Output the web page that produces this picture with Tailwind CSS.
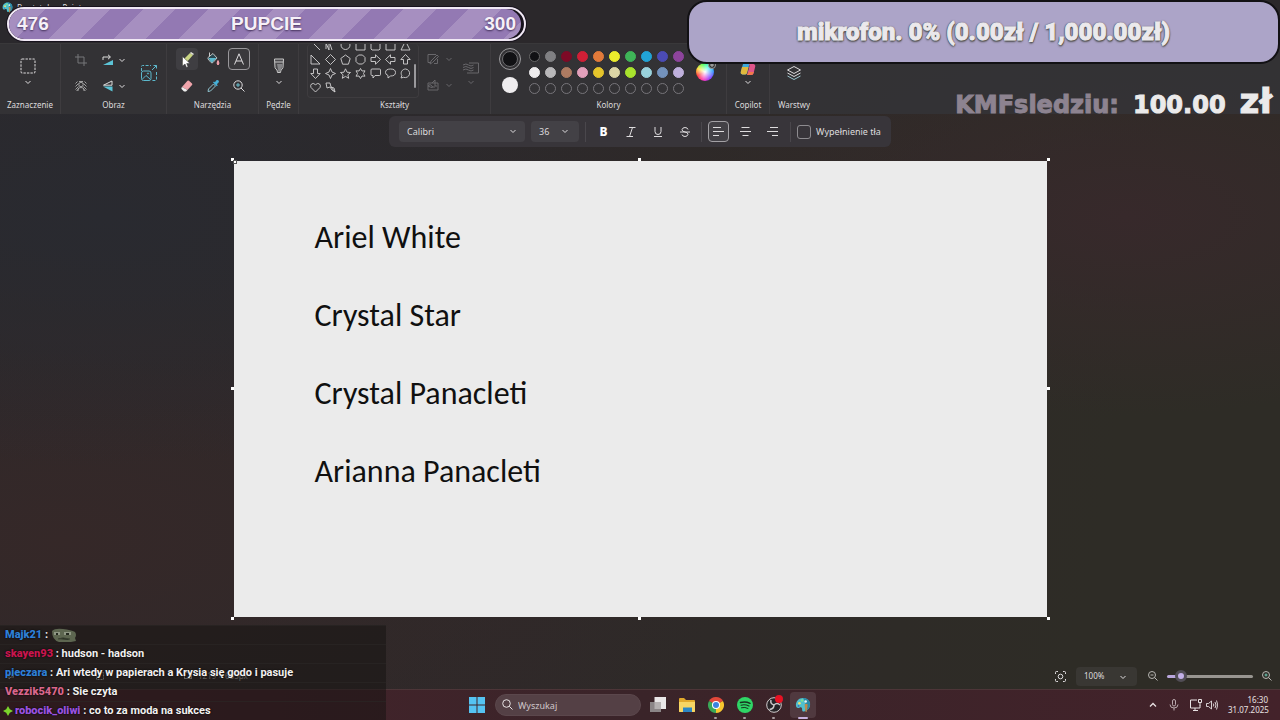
<!DOCTYPE html>
<html lang="pl" class="w-full h-full">
	<head>
		<meta charset="UTF-8">
		<meta name="viewport" content="width=device-width, initial-scale=1.0">
		<title>Bez tytułu – Paint</title>
		<script src="https://cdn.jsdelivr.net/npm/@tailwindcss/browser@4"></script>
	</head>
	<body class="relative w-full h-full min-h-screen overflow-hidden flex flex-col text-[#dedcde] text-[9px] leading-3 font-['Noto_Sans','Open_Sans',sans-serif] bg-[#2c2a2b] bg-[radial-gradient(ellipse_at_8%_30%,#292a30_0%,transparent_35%),radial-gradient(ellipse_at_5%_75%,#352828_0%,transparent_40%),radial-gradient(ellipse_at_88%_30%,#37292b_0%,transparent_28%),linear-gradient(100deg,#2c292c_0%,#2e2929_45%,#2e2c26_85%)]">

		<svg class="hidden">
			<symbol id="chevron" viewBox="0 0 8 8"><path d="M1.5 3 4 5.5 6.5 3" fill="none" stroke="currentColor"/></symbol>
			<symbol id="palette" viewBox="0 0 18 18">
				<path d="M9 1C4 1 1 5 1 9c0 3 2 4 4 3s3 0 3 2 1 3 3 2c4-1 6-4 6-8 0-4-4-7-8-7z" fill="#4fc0cf"/>
				<path d="M9 1c5 0 8 3 8 7s-2 7-6 8c1-5 2-9-2-15z" fill="#2b8aa8"/>
				<circle cx="5" cy="7" r="1.5" fill="#f0e06a"/><circle cx="8" cy="4" r="1.4" fill="#7ddf8f"/><circle cx="12" cy="5" r="1.4" fill="#e8f4f4"/><circle cx="4" cy="10" r="1" fill="#3a6fc0"/>
				<path d="M11 8h3v3l-1 6h-1l-1-6z" fill="#c08a4a"/>
			</symbol>
		</svg>

		<header class="h-[43px] shrink-0 flex items-start gap-1 px-0.5 pt-0.5 bg-[#2a282c]/80">
			<svg class="w-[11px] h-[11px]"><use href="#palette"/></svg>
			<h1 class="text-[8px]">Bez tytułu – Paint</h1>
		</header>

		<nav class="h-[71px] shrink-0 flex bg-[#343336]/90 border-t border-[#39383a] text-[8px] [&_h2]:mt-0.5">
			<section class="w-[61px] flex flex-col items-center border-r border-[#3e3c3f]">
				<button class="h-[53px] pt-[14px] pr-1 flex flex-col items-center" aria-label="Zaznacz">
					<svg class="w-4 h-4" viewBox="0 0 16 16"><rect x="1" y="1" width="14" height="14" rx="1" fill="none" stroke="currentColor" stroke-dasharray="2.4 1.1"/></svg>
					<svg class="w-2 h-2 mt-1"><use href="#chevron"/></svg>
				</button>
				<h2>Zaznaczenie</h2>
			</section>

			<section class="w-[106px] flex flex-col items-center border-r border-[#3e3c3f]">
				<div class="h-[53px] pt-1 flex items-center gap-3">
					<div class="grid grid-cols-[22px_30px] gap-x-1.5 gap-y-1">
						<button class="h-[22px] grid place-items-center text-[#77767a]" aria-label="Przytnij">
							<svg class="w-3 h-3" viewBox="0 0 12 12" fill="none" stroke="currentColor"><path d="M3 0v9h9M0 3h9v9"/></svg>
						</button>
						<button class="h-[22px] flex items-center gap-1 pl-1" aria-label="Obróć">
							<svg class="w-3 h-3 shrink-0" viewBox="0 0 12 12"><path d="M1 6V3h7M6 0.8 8.5 3 6 5.2" fill="none" stroke="#ddd"/><path d="M11 6v5H1z" fill="#5cc3d6"/></svg>
							<svg class="w-2 h-2 shrink-0"><use href="#chevron"/></svg>
						</button>
						<button class="h-[22px] grid place-items-center text-[#bbb]" aria-label="Usuń tło">
							<svg class="w-3 h-3" viewBox="0 0 12 12" fill="none" stroke="currentColor" stroke-width=".8"><path d="M.5 3.500l2-2M.5 6.500l3-3M.5 9.500l3-3M1.500 11l2-2M9.500 1.500l2 2M8.500 3.500l3 3M8.500 6.500l3 3M8.500 9l2 2M3 11V9.500q0-2 3-2t3 2V11M4 1.500h4"/><circle cx="6" cy="4.500" r="2.200"/></svg>
						</button>
						<button class="h-[22px] flex items-center gap-1 pl-1" aria-label="Odwróć">
							<svg class="w-3 h-3 shrink-0" viewBox="0 0 12 12"><path d="M1.500 5.200 10 1v4.200z" fill="none" stroke="#ddd"/><path d="M1 6.500h9.500v5z" fill="#5cc3d6"/></svg>
							<svg class="w-2 h-2 shrink-0"><use href="#chevron"/></svg>
						</button>
					</div>
					<button aria-label="Zmień rozmiar">
						<svg class="w-[18px] h-[18px]" viewBox="0 0 18 18" fill="none" stroke="#5cb8cc"><path d="M1.500 7V2.500q0-1 1-1H11M16.500 8v7.500q0 1-1 1H12" stroke-dasharray="3 1.500"/><path d="M12 6l4.500-4.500M13.500 1.500h3v3"/><rect x="1.500" y="7" width="9.500" height="9.500" rx="2"/><path d="M2.500 15 6 11.500l4 3.500"/><circle cx="8" cy="9.500" r=".6"/></svg>
					</button>
				</div>
				<h2>Obraz</h2>
			</section>

			<section class="w-[92px] flex flex-col items-center border-r border-[#3e3c3f]">
				<div class="h-[53px] pt-1 grid grid-cols-3 gap-x-1 gap-y-1">
					<button class="w-[22px] h-[22px] grid place-items-center rounded-sm bg-[#3f3e42]" aria-label="Ołówek">
						<svg class="w-4 h-4" viewBox="0 0 16 16"><path d="M4 9 11 2l3 2-7 8-4 2z" fill="#c9d483"/><path d="M11 2l1-1 3 2-1 1z" fill="#e8e8e0"/><path d="M4 9l3 3-4 2z" fill="#6d7358"/></svg>
					</button>
					<button class="w-[22px] h-[22px] grid place-items-center" aria-label="Wypełnienie">
						<svg class="w-3.5 h-3.5" viewBox="0 0 14 14"><path d="M2 5.500 7 1.500l4 4.500-4 4.500q-1 .7-2 0L2 7z" fill="#29464f" stroke="#ccc" stroke-width=".9"/><path d="M2.500 6h8l-4 4.300H5z" fill="#5cb8cc"/><path d="M3.500.5v4" stroke="#ccc"/><path d="M12 8.500q2 3 0 4.500-2-1.500 0-4.500z" fill="#f2a3ae" stroke="#f2a3ae"/></svg>
					</button>
					<button class="w-[22px] h-[22px] grid place-items-center rounded-[4px] border border-[#99979b] bg-[#3a393c]" aria-label="Tekst">
						<svg class="w-3 h-3" viewBox="0 0 12 12" fill="none" stroke="currentColor"><path d="M1.500 11.500 6 .8l4.500 10.700M3 8h6"/></svg>
					</button>
					<button class="w-[22px] h-[22px] grid place-items-center" aria-label="Gumka">
						<svg class="w-3.5 h-3.5" viewBox="0 0 14 14"><path d="M2 8 7.500 1.800q.7-.6 1.500 0l3 2.700q.7.700 0 1.500L7.500 11z" fill="#f0a4ab"/><path d="M2 8l5.500 3-1.500 1.500H4L1.500 10q-.5-1 .5-2z" fill="#eee"/></svg>
					</button>
					<button class="w-[22px] h-[22px] grid place-items-center" aria-label="Selektor kolorów">
						<svg class="w-3.5 h-3.5" viewBox="0 0 14 14"><path d="M2 12.500l.5-2.500L7.500 5l2 2-5 5z" fill="none" stroke="#8fc3cf"/><path d="M7 3.500 10.800 7.200l1-1-1-1L13 3q0-2.500-2.300-2L8.800 3.200 8 2.500z" fill="#46b0d8"/></svg>
					</button>
					<button class="w-[22px] h-[22px] grid place-items-center" aria-label="Lupa">
						<svg class="w-3 h-3" viewBox="0 0 12 12" fill="none" stroke="currentColor"><circle cx="5" cy="5" r="4.200"/><path d="M8 8l3.500 3.500"/><path d="M5 3v4M3 5h4" stroke="#6ac0d0"/></svg>
					</button>
				</div>
				<h2>Narzędzia</h2>
			</section>

			<section class="w-10 flex flex-col items-center border-r border-[#3e3c3f]">
				<button class="h-[53px] pt-[14px] flex flex-col items-center" aria-label="Pędzel">
					<svg class="w-4 h-4" viewBox="0 0 16 16"><path d="M3.500 1h9l-.5 8.500q-.3 1.500-2 2.500L9.500 14.500h-3L6 12q-1.700-1-2-2.500z" fill="#4c4b4e" stroke="#c8c8c8"/><path d="M4 4h8" stroke="#c8c8c8"/><path d="M6 6h5.500l-1 5-2 3h-1z" fill="#858588"/></svg>
					<svg class="w-2 h-2 mt-1"><use href="#chevron"/></svg>
				</button>
				<h2>Pędzle</h2>
			</section>

			<section class="w-48 flex flex-col items-center border-r border-[#3e3c3f]">
				<div class="w-full h-[53px] pl-2 flex">
					<div class="w-[112px] h-[54px] flex overflow-hidden border border-t-0 border-[#3e3c3f] rounded">
						<div id="shapes" class="-mt-1.5 grid grid-cols-7 auto-rows-[14px] content-start"></div>
						<div class="w-0.5 h-6 mt-5 ml-px rounded bg-[#9a999c]"></div>
					</div>
					<div class="ml-2 pt-1 grid grid-cols-[16px_10px] gap-x-0.5 gap-y-1 content-start items-center text-[#68676b]">
						<svg class="w-3 h-[22px]" viewBox="0 0 12 12" fill="none" stroke="currentColor"><path d="M9 1.500H1v8h3M3 11l1-3 6-6 1.500 1.500-6 6zM10.500 6v4.500H7"/></svg>
						<svg class="w-2 h-2"><use href="#chevron"/></svg>
						<svg class="w-3 h-[22px]" viewBox="0 0 12 12" fill="none" stroke="currentColor"><path d="M1 4h10v7H1zM1 7q2-3 4 0t-4 0M5 4l3-3v6h2M5 8h3"/></svg>
						<svg class="w-2 h-2"><use href="#chevron"/></svg>
					</div>
					<div class="ml-2 pt-[18px] flex flex-col items-center text-[#68676b]">
						<svg class="w-4 h-3" viewBox="0 0 16 12" fill="none" stroke="currentColor"><path d="M6 1h9.500v10H4"/><path d="M0 3q3-2 5.500 0t5 0M0 5.500q3-2 5.500 0t5 0M0 8q3-2 5.500 0t5 0"/></svg>
						<svg class="w-2 h-2 mt-1"><use href="#chevron"/></svg>
					</div>
				</div>
				<h2>Kształty</h2>
			</section>

			<section class="w-[236px] flex flex-col items-center border-r border-[#3e3c3f]">
				<div class="w-full h-[53px] pt-1 pl-2 flex">
					<div class="w-[22px] flex flex-col items-center gap-1">
						<button class="w-[22px] h-[22px] rounded-full border border-[#9b9a9d] p-0.5" aria-label="Kolor 1"><span class="block w-full h-full rounded-full border border-[#6c6b6e] bg-[#111114]"></span></button>
						<button class="w-4 h-4 mt-[3px] rounded-full bg-[#eeecee]" aria-label="Kolor 2"></button>
					</div>
					<div id="colors" class="ml-2 mt-[3px] grid grid-cols-10 auto-rows-[16px] gap-x-[5px] content-start"></div>
					<button class="relative ml-3 mt-[15px] w-[18px] h-[18px] rounded-full bg-[radial-gradient(circle,#fff_0%,transparent_70%),conic-gradient(from_90deg,#38f,#83f,#f3b,#f33,#fd3,#4f5,#2ee,#38f)]" aria-label="Edytuj kolory">
						<svg class="absolute -top-0.5 -right-0.5 w-2 h-2" viewBox="0 0 8 8"><circle cx="4" cy="4" r="3.500" fill="#333" stroke="#999"/><path d="M4 2v4M2 4h4" stroke="#bbb"/></svg>
					</button>
				</div>
				<h2>Kolory</h2>
			</section>

			<section class="w-[43px] flex flex-col items-center border-r border-[#3e3c3f]">
				<button class="h-[53px] pt-[17px] flex flex-col items-center" aria-label="Copilot">
					<svg class="w-4 h-4" viewBox="0 0 16 16"><path d="M4 1h6L7 12q-.5 1.500-2 1.500H2.500Q0 13 1 10l2-7z" fill="#3fa7d8"/><path d="M1 10l1-4h6.500L7 12q-.5 1.500-2 1.500H2.500Q0 13 1 10z" fill="#e0b83c"/><path d="M9 3h4.500q2.500.5 1.500 3.500l-1.500 6q-.5 1.500-2 1.500H7l2.500-9z" fill="#e0558a"/><path d="M10 1h2q1.500.5 1.500 2H9z" fill="#9a6be0"/><path d="M9 11h5l-1 2q-.5 1-2 1H7z" fill="#f07a4a"/></svg>
					<svg class="w-2 h-2 mt-px"><use href="#chevron"/></svg>
				</button>
				<h2>Copilot</h2>
			</section>

			<section class="w-12 flex flex-col items-center">
				<button class="h-[53px] grid place-items-center pt-1" aria-label="Warstwy">
					<svg class="w-4 h-4" viewBox="0 0 16 16" fill="none" stroke="currentColor" stroke-linejoin="round"><path d="M8 1.500 14.500 5 8 8.500 1.500 5z"/><path d="M1.500 8 8 11.500 14.500 8"/><path d="M1.500 11 8 14.500l6.500-3.500" stroke="#9cc6cf"/></svg>
				</button>
				<h2>Warstwy</h2>
			</section>
		</nav>

		<main class="flex-1 min-h-0 flex flex-col items-center pt-0.5">
			<div class="h-[31px] px-[10px] flex items-center rounded-md bg-[#38353a]">
				<div class="relative w-[126px] h-[21px]">
					<select class="appearance-none w-full h-full pl-2 rounded-sm bg-[#434146]" aria-label="Czcionka"><option>Calibri</option></select>
					<svg class="absolute right-2 top-1.5 w-2 h-2 pointer-events-none"><use href="#chevron"/></svg>
				</div>
				<div class="relative w-12 h-[21px] ml-1.5">
					<select class="appearance-none w-full h-full pl-2 rounded-sm bg-[#434146]" aria-label="Rozmiar"><option>36</option></select>
					<svg class="absolute right-2.5 top-1.5 w-2 h-2 pointer-events-none"><use href="#chevron"/></svg>
				</div>
				<div class="w-px h-5 ml-1.5 mr-1 bg-[#4a474c]"></div>
				<button class="w-[27px] text-[12px] font-extrabold text-white" aria-label="Pogrubienie">B</button>
				<button class="w-[27px] grid place-items-center" aria-label="Kursywa"><svg class="w-2.5 h-2.5" viewBox="0 0 10 10" fill="none" stroke="currentColor"><path d="M3 .5h6.500M.5 9.500H7M6.500.5l-3 9"/></svg></button>
				<button class="w-[27px] grid place-items-center" aria-label="Podkreślenie"><svg class="w-2.5 h-2.5" viewBox="0 0 10 10" fill="none" stroke="currentColor"><path d="M2 0v4.500q0 3 3 3t3-3V0M1 9.500h8"/></svg></button>
				<button class="w-[27px] grid place-items-center" aria-label="Przekreślenie"><svg class="w-2.5 h-2.5" viewBox="0 0 10 10" fill="none" stroke="currentColor"><path d="M8 2.500Q7.500.5 5 .5T2 2.700Q2 4.500 5 5t3 2.300Q7.500 9.500 5 9.500T2 7.500M0 5h10"/></svg></button>
				<div class="w-px h-5 mx-[3px] bg-[#4a474c]"></div>
				<button class="w-[27px] grid place-items-center" aria-label="Do lewej"><span class="w-[21px] h-[21px] grid place-items-center rounded-[4px] border border-[#a3a1a5] bg-[#434146]"><svg class="w-[11px] h-[9px]" viewBox="0 0 11 9" stroke="currentColor"><path d="M0 .5h8M0 4.500h11M0 8.500h6"/></svg></span></button>
				<button class="w-[27px] grid place-items-center" aria-label="Do środka"><svg class="w-[11px] h-[9px]" viewBox="0 0 11 9" stroke="currentColor"><path d="M1.500.5h8M0 4.500h11M2.500 8.500h6"/></svg></button>
				<button class="w-[27px] grid place-items-center" aria-label="Do prawej"><svg class="w-[11px] h-[9px]" viewBox="0 0 11 9" stroke="currentColor"><path d="M3 .5h8M0 4.500h11M5 8.500h6"/></svg></button>
				<div class="w-px h-5 ml-1 mr-1.5 bg-[#4a474c]"></div>
				<input id="fill" type="checkbox" class="appearance-none w-[14px] h-[14px] rounded-[3px] border border-[#8e8c90]">
				<label for="fill" class="ml-[5px]">Wypełnienie tła</label>
			</div>

			<div class="relative mt-3.5 w-[813px] h-[456px] shrink-0 bg-[#ebebeb] text-[#101010]">
				<div class="pl-[81px] pt-[57px] flex flex-col gap-[39px] font-['Carlito','Lato',sans-serif] text-[32px] leading-[39px]">
					<p>Ariel White</p>
					<p>Crystal Star</p>
					<p>Crystal Panacleti</p>
					<p>Arianna Panacleti</p>
				</div>
				<i class="absolute -left-[3px] -top-[3px] w-[3px] h-[3px] bg-white"></i>
				<i class="absolute -left-px -top-px w-1 h-1 bg-white border border-[#555]"></i>
				<i class="absolute left-1/2 -top-[3px] -ml-0.5 w-[3px] h-[3px] bg-white"></i>
				<i class="absolute -right-[3px] -top-[3px] w-[3px] h-[3px] bg-white"></i>
				<i class="absolute -left-[3px] top-1/2 -mt-0.5 w-[3px] h-[3px] bg-white"></i>
				<i class="absolute -right-[3px] top-1/2 -mt-0.5 w-[3px] h-[3px] bg-white"></i>
				<i class="absolute -left-[3px] -bottom-[3px] w-[3px] h-[3px] bg-white"></i>
				<i class="absolute left-1/2 -bottom-[3px] -ml-0.5 w-[3px] h-[3px] bg-white"></i>
				<i class="absolute -right-[3px] -bottom-[3px] w-[3px] h-[3px] bg-white"></i>
			</div>
		</main>

		<footer class="h-[26px] shrink-0 flex items-center px-2 text-[#a9a8a6]">
			<svg class="w-2 h-2" viewBox="0 0 8 8" fill="none" stroke="currentColor"><path d="M1 1v6l2-2h3z"/></svg>
			<svg class="w-2 h-2 ml-20" viewBox="0 0 8 8"><rect x=".5" y=".5" width="7" height="7" fill="none" stroke="currentColor" stroke-dasharray="2 1"/></svg>
			<svg class="w-2 h-2 ml-20" viewBox="0 0 8 8"><rect x=".5" y=".5" width="7" height="6" fill="none" stroke="currentColor"/></svg>
			<span class="ml-1.5 text-[8px]">1219 × 685px</span>
			<div class="ml-auto flex items-center text-[#dedcde]">
				<svg class="w-[11px] h-[11px]" viewBox="0 0 11 11" fill="none" stroke="currentColor"><path d="M.5 3V1.500q0-1 1-1H3M8 .5h1.500q1 0 1 1V3M10.500 8v1.500q0 1-1 1H8M3 10.500H1.500q-1 0-1-1V8"/><circle cx="5.500" cy="5.500" r="2.300"/></svg>
				<div class="relative w-[61px] h-[19px] ml-2.5">
					<select class="appearance-none w-full h-full pl-2 rounded-sm bg-[#393733] text-[8px]" aria-label="Powiększenie"><option>100%</option></select>
					<svg class="absolute right-2.5 top-1.5 w-2 h-2 pointer-events-none"><use href="#chevron"/></svg>
				</div>
				<button class="ml-[11px]" aria-label="Pomniejsz"><svg class="w-[10px] h-[10px]" viewBox="0 0 10 10" fill="none" stroke="#b8b6b3"><circle cx="4" cy="4" r="3.500"/><path d="M6.500 6.500 9.500 9.500M2.500 4h3"/></svg></button>
				<input type="range" min="0" max="100" value="11" aria-label="Skala" class="appearance-none w-[86px] h-[3px] ml-[9px] rounded-full bg-linear-to-r from-[#b9a6dc] from-15% to-[#989590] to-15% [&::-webkit-slider-thumb]:appearance-none [&::-webkit-slider-thumb]:w-3 [&::-webkit-slider-thumb]:h-3 [&::-webkit-slider-thumb]:rounded-full [&::-webkit-slider-thumb]:border-3 [&::-webkit-slider-thumb]:border-[#514d55] [&::-webkit-slider-thumb]:bg-[#c3b0e8]">
				<button class="ml-[9px]" aria-label="Powiększ"><svg class="w-[10px] h-[10px]" viewBox="0 0 10 10" fill="none" stroke="#b8b6b3"><circle cx="4" cy="4" r="3.500"/><path d="M6.500 6.500 9.500 9.500"/><path d="M2.500 4h3M4 2.500v3" stroke="#6fc7b4"/></svg></button>
			</div>
		</footer>

		<div class="h-[31px] shrink-0 grid grid-cols-[1fr_auto_1fr] items-center border-t border-[#4d3538] bg-linear-to-r from-[#48222b] via-[#3a2429] to-[#43222a]">
			<span></span>
			<div class="flex items-center">
				<button class="w-7 grid place-items-center" aria-label="Start"><svg class="w-4 h-4" viewBox="0 0 16 16" fill="#55c3f2"><path d="M0 0h7.500v7.500H0zM8.500 0H16v7.500H8.500zM0 8.500h7.500V16H0zM8.500 8.500H16V16H8.500z"/></svg></button>
				<div class="relative ml-1 mr-0.5">
					<input type="text" placeholder="Wyszukaj" aria-label="Wyszukaj" class="block w-[146px] h-[22px] pl-[22px] rounded-full bg-[#544045] border border-[#5b474c] text-[9px] placeholder-[#d0c6c9]">
					<svg class="absolute left-[7px] top-[5px] w-[11px] h-[11px]" viewBox="0 0 11 11" fill="none" stroke="#e8e3e4"><circle cx="4.500" cy="4.500" r="3.800"/><path d="M7.300 7.300 10.500 10.500"/></svg>
				</div>
				<button class="w-[29px] grid place-items-center" aria-label="Widok zadań"><svg class="w-4 h-4" viewBox="0 0 16 16"><path d="M4.500 0H16v12H4.500z" fill="#e9e7e8"/><path d="M0 5h11v10H0z" fill="#8b8587"/><path d="M4.500 5H11v7H4.500z" fill="#b5b1b2"/></svg></button>
				<button class="w-[29px] grid place-items-center" aria-label="Eksplorator plików"><svg class="w-4 h-4" viewBox="0 0 16 16"><path d="M0 2q0-1 1-1h4l2 2h8q1 0 1 1v11H0z" fill="#e2a92c"/><path d="M0 5h16v9q0 1-1 1H1q-1 0-1-1z" fill="#f7d564"/><path d="M4 10.500h9V15H4z" fill="#2b86c5"/></svg></button>
				<button class="relative w-[29px] h-7 grid place-items-center" aria-label="Chrome"><svg class="w-4 h-4" viewBox="0 0 16 16"><path d="M8 8 1.070 4A8 8 0 0 1 14.930 4z" fill="#e2483a"/><path d="M8 8V16A8 8 0 0 1 1.070 4z" fill="#3aa757"/><path d="M8 8 14.930 4A8 8 0 0 1 8 16z" fill="#f7c62f"/><circle cx="8" cy="8" r="4" fill="#fff"/><circle cx="8" cy="8" r="3" fill="#3b82e0"/></svg><i class="absolute bottom-0 w-[3px] h-0.5 rounded bg-[#a99da0]"></i></button>
				<button class="relative w-[29px] h-7 grid place-items-center" aria-label="Spotify"><svg class="w-4 h-4" viewBox="0 0 16 16" fill="none" stroke="#17331f" stroke-linecap="round"><circle cx="8" cy="8" r="8" fill="#2fd566" stroke="none"/><path d="M3.500 5.500q5-1.500 9.500.8" stroke-width="1.500"/><path d="M4 8.200q4-1.200 8 .8" stroke-width="1.200"/><path d="M4.500 10.700q3.500-1 6.500.7"/></svg><i class="absolute bottom-0 w-[3px] h-0.5 rounded bg-[#a99da0]"></i></button>
				<button class="relative w-[29px] h-7 grid place-items-center" aria-label="OBS"><svg class="w-4 h-4" viewBox="0 0 16 16"><circle cx="8" cy="8" r="7.300" fill="#272427" stroke="#d0cccd"/><path d="M8 8q-4-1-3-5M8 8q3-3 6 0M8 8q0 4-4.500 4.500" fill="none" stroke="#c9c5c6" stroke-width="1.500"/></svg><b class="absolute top-1 right-[5px] w-2 h-2 rounded-full bg-[#e81123]"></b><i class="absolute bottom-0 w-[3px] h-0.5 rounded bg-[#a99da0]"></i></button>
				<button class="relative w-[29px] h-7 grid place-items-center" aria-label="Paint"><span class="w-[26px] h-[26px] grid place-items-center rounded-sm bg-[#50393f]"><svg class="w-4 h-4"><use href="#palette"/></svg></span><i class="absolute bottom-0 w-2.5 h-0.5 rounded bg-[#c9b3e0]"></i></button>
			</div>
			<div class="flex items-center justify-end pr-3 text-[#e8e2e3] text-[8px]">
				<svg class="w-2 h-2" viewBox="0 0 8 8"><path d="M1 5.500 4 2.500l3 3" fill="none" stroke="currentColor" stroke-width="1.300"/></svg>
				<svg class="w-[10px] h-3 ml-3" viewBox="0 0 10 12" fill="none" stroke="#b9a9ad"><rect x="3.500" y=".5" width="3" height="6.500" rx="1.500"/><path d="M1 5.500q0 3.500 4 3.500t4-3.500M5 9v2.500"/></svg>
				<svg class="w-3 h-3 ml-[11px]" viewBox="0 0 12 12" fill="none" stroke="currentColor"><path d="M7 1H.5v8H10V6M3 11.500h5M5 9v2.500"/><path d="M8.500.5h3v3h-3zM10 3.500v3"/></svg>
				<svg class="w-3 h-3 ml-1" viewBox="0 0 12 12" fill="none" stroke="currentColor"><path d="M.5 4.500v3h2L5.500 10V2l-3 2.500zM7.300 4.500q1 1.500 0 3M9 3q2 3 0 6M10.500 1.500q2.500 4.500 0 9" stroke-width=".9"/></svg>
				<div class="ml-[10px] w-10 text-right leading-[10px] whitespace-nowrap"><p>16:30</p><p>31.07.2025</p></div>
			</div>
		</div>

		<!-- stream overlays -->
		<div class="absolute left-[7px] top-[7px] w-[519px] h-[34px] rounded-full border-2 border-[#f0e8f4] bg-[#17121c] shadow-[0_0_0_1px_#17121c] font-['Liberation_Sans',sans-serif] text-[19px] font-bold text-[#f6f0f8]">
			<div class="grid grid-cols-3 items-center h-full mr-[3px] pl-2 pr-[5px] rounded-full bg-[repeating-linear-gradient(135deg,#9379b3_0px,#9379b3_3px,#a68fc0_3px,#a68fc0_26px,#9379b3_26px,#9379b3_46px)] [text-shadow:0_1px_2px_#43305a]">
				<span>476</span>
				<span class="text-center">PUPCIE</span>
				<span class="text-right">300</span>
			</div>
		</div>

		<div class="absolute left-[687px] right-0 top-0 h-[64px] grid place-items-center rounded-[20px] border-2 border-[#121114] bg-[#aca4c8] font-['Roboto',sans-serif] text-[24px] leading-8 font-black text-[#ebe9ec] [-webkit-text-stroke:1px_#ebe9ec] [text-shadow:0_0_2px_#444,1px_1px_1px_#555,-1px_0_1px_#555,0_2px_2px_#555]">
			<span>mikrofon. 0% (0.00zł / 1,000.00zł)</span>
		</div>

		<div class="absolute right-2 top-[85px] flex items-baseline gap-3.5 font-['DejaVu_Sans',sans-serif] font-bold text-[24px] leading-8 text-[#ebeaea] [-webkit-text-stroke:1px_currentColor]">
			<span class="text-[#8d8390]">KMFsledziu:</span>
			<span>100.00</span>
			<span class="text-[34px]">zł</span>
		</div>

		<ul class="absolute left-0 bottom-0 w-[386px] bg-[#141110]/50 font-['Roboto',sans-serif] text-[11px] leading-[18px] font-bold text-[#f2f0f0] [&>li]:h-[19px] [&>li]:pl-[5px] [&>li]:border-t [&>li]:border-[#2c2826]/60 [text-shadow:0_0_2px_#000]">
			<li><b class="text-[#2f7fd6]">Majk21</b> :
				<svg class="inline-block w-[26px] h-[15px]" viewBox="0 0 26 15"><path d="M1 3Q4 0 12 1t12 3q2 3 0 6l1 3-5 1H8Q1 12 1 3z" fill="#5d6650"/><path d="M3 4h6v3H3zM13 4h7v3h-7z" fill="#8f9784"/><path d="M5 5h2v2H5zM15 5h3v2h-3zM7 11q5-3 12 1" fill="#24291f"/><path d="M7 11q5-2 12 0" fill="none" stroke="#3a4132"/></svg>
			</li>
			<li><b class="text-[#c8164f]">skayen93</b> : <span>hudson - hadson</span></li>
			<li><b class="text-[#2f7fd6]">pieczara</b> : <span>Ari wtedy w papierach a Krysia się godo i pasuje</span></li>
			<li><b class="text-[#d9668c]">Vezzik5470</b> : <span>Sie czyta</span></li>
			<li><svg class="inline-block -ml-0.5 mr-0.5 w-[10px] h-[10px]" viewBox="0 0 10 10"><path d="M5 0 6.800 3.200 10 5 6.800 6.800 5 10 3.200 6.800 0 5 3.200 3.200z" fill="#7bd42c"/></svg><b class="text-[#9a52e0]">robocik_oliwi</b> : <span>co to za moda na sukces</span></li>
		</ul>

		<!-- mouse pointer -->
		<svg class="absolute left-[182px] top-[56px] w-[9px] h-3 pointer-events-none" viewBox="0 0 9 12"><path d="M.5.5v9.500L3 8l1.500 3.500 1.500-.7L4.700 7.500H8z" fill="#fff" stroke="#333" stroke-width=".5"/></svg>
	</body>
</html>
<script>
	const colors = [
		"#111114", "#808083", "#7d0a26", "#d01f36", "#e27a3a", "#ecec2c", "#3fb558", "#22a4d6", "#4b4bb5", "#8d449c",
		"#eeecee", "#b9b8ba", "#ae7b62", "#e3a0bb", "#e5c42b", "#dcd5a6", "#a8e32d", "#9ad2dc", "#7392bc", "#bfb0dc",
		"", "", "", "", "", "", "", "", "", "",
	];
	const shapes = [
		"M1 1l9 9", "M1 9V3l3 7V1l3 9", "M1 5a4.500 4.500 0 1 0 9 0a4.500 4.500 0 1 0-9 0", "M1 1h9v9H1z", "M2 1h7l1 1v7l-1 1H2L1 9V2z", "M1 10V1h9v9z", "M5.500 1 10 10H1z",
		"M1 1v9h9z", "M5.500.5l5 5-5 5-5-5z", "M5.500 1l4.700 3.500-1.800 5.700H2.600L.8 4.500z", "M3.500 1h4L10 3.500v4L7.500 10h-4L1 7.500v-4z", "M1 3.500h4.500V.8l5 4.700-5 4.700V7.500H1z", "M10 3.500H5.500V.8l-5 4.700 5 4.700V7.500H10z", "M3.500 10V5.500H.8l4.700-5 4.700 5H7.500V10z",
		"M3.500 1v4.500H.8l4.700 5 4.700-5H7.500V1z", "M5.500.5 7 4l3.500 1.500L7 7l-1.500 3.500L4 7 .5 5.500 4 4z", "M5.500.8 7 4.200l3.500.3-2.600 2.300.8 3.500-3.200-1.900-3.200 1.900.8-3.500L.5 4.500 4 4.200z", "M5.500.5 7 3l3-.2-1.500 2.700L10 8.200 7 8l-1.500 2.500L4 8l-3 .2 1.500-2.700L1 2.800 4 3z", "M2 1h7.500q1 0 1 1v4.500q0 1-1 1H5l-2 2.500V7.500H2q-1 0-1-1V2q0-1 1-1z", "M5.500 1q5 0 5 3.500T5.500 8L3 10V7.500Q.5 6.500.5 4.500.5 1 5.500 1z", "M5.500 1a4.500 4.300 0 1 1-2 8.300L1 10l.8-2.500A4.500 4.300 0 0 1 5.500 1z",
		"M5.500 10 1 5.500Q0 3.500 1.500 2T5.500 2.700Q8 .5 9.500 2T10 5.500z", "M1 1h4l1 4 3 1 1 4-3-2-2-3-3 1zM6 5l4 5",
	];

	document.getElementById("colors").innerHTML = colors.map((c) =>
		`<button class="w-[11px] h-[11px] rounded-full border border-[#77757a]" style="background:${c || "transparent"}${c ? `;border-color:${c === "#111114" ? "#666" : c}` : ""}" aria-label="Kolor"></button>`
	).join("");
	document.getElementById("shapes").innerHTML = shapes.map((d) =>
		`<button class="w-[15px] h-[14px] grid place-items-center" aria-label="Kształt"><svg class="w-[11px] h-[11px]" viewBox="0 0 11 11" fill="none" stroke="#d2d1d3" stroke-width=".9"><path d="${d}"/></svg></button>`
	).join("");
</script>
